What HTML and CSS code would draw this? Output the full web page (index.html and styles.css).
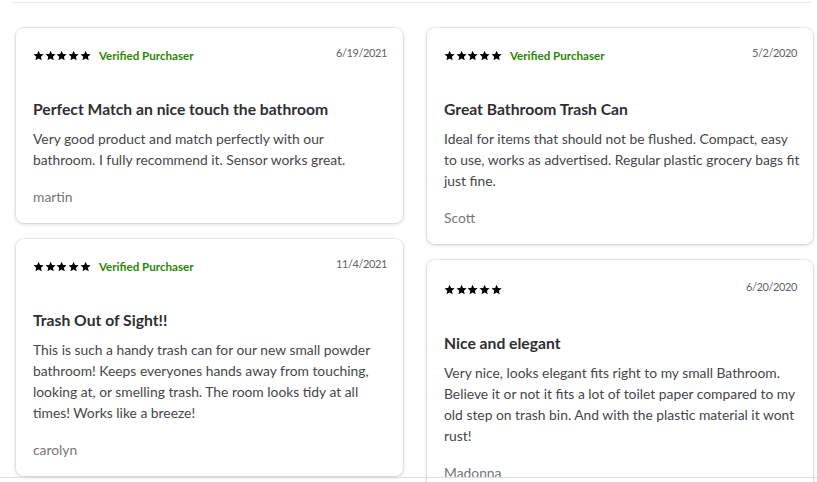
FILE: index.html
```html
<!DOCTYPE html>
<html>
<head>
<meta charset="utf-8">
<link rel="stylesheet" href="styles.css">
</head>
<body>
<svg class="defs" width="0" height="0" aria-hidden="true">
  <defs>
    <symbol id="star" viewBox="0 0 24 24">
      <path d="M12 1.5l3.1 7.1 7.7.7-5.8 5.1 1.7 7.6L12 18l-6.7 4 1.7-7.6-5.8-5.1 7.7-.7z"/>
    </symbol>
  </defs>
</svg>
<div class="page">
  <div class="topline"></div>
  <div class="reviews">
    <div class="col">
      <div class="card">
        <div class="head">
          <div class="rating">
            <span class="stars"><svg><use href="#star"/></svg><svg><use href="#star"/></svg><svg><use href="#star"/></svg><svg><use href="#star"/></svg><svg><use href="#star"/></svg></span>
            <span class="verified">Verified Purchaser</span>
          </div>
          <span class="date">6/19/2021</span>
        </div>
        <h3 class="title">Perfect Match an nice touch the bathroom</h3>
        <p class="text">Very good product and match perfectly with our<br>bathroom. I fully recommend it. Sensor works great.</p>
        <div class="author">martin</div>
      </div>
      <div class="card">
        <div class="head">
          <div class="rating">
            <span class="stars"><svg><use href="#star"/></svg><svg><use href="#star"/></svg><svg><use href="#star"/></svg><svg><use href="#star"/></svg><svg><use href="#star"/></svg></span>
            <span class="verified">Verified Purchaser</span>
          </div>
          <span class="date">11/4/2021</span>
        </div>
        <h3 class="title">Trash Out of Sight!!</h3>
        <p class="text">This is such a handy trash can for our new small powder bathroom! Keeps everyones hands away from touching, looking at, or smelling trash. The room looks tidy at all times! Works like a breeze!</p>
        <div class="author">carolyn</div>
      </div>
    </div>
    <div class="col">
      <div class="card">
        <div class="head">
          <div class="rating">
            <span class="stars"><svg><use href="#star"/></svg><svg><use href="#star"/></svg><svg><use href="#star"/></svg><svg><use href="#star"/></svg><svg><use href="#star"/></svg></span>
            <span class="verified">Verified Purchaser</span>
          </div>
          <span class="date">5/2/2020</span>
        </div>
        <h3 class="title">Great Bathroom Trash Can</h3>
        <p class="text">Ideal for items that should not be flushed. Compact, easy to use, works as advertised. Regular plastic grocery bags fit just fine.</p>
        <div class="author">Scott</div>
      </div>
      <div class="card card-plain">
        <div class="head">
          <div class="rating">
            <span class="stars"><svg><use href="#star"/></svg><svg><use href="#star"/></svg><svg><use href="#star"/></svg><svg><use href="#star"/></svg><svg><use href="#star"/></svg></span>
          </div>
          <span class="date">6/20/2020</span>
        </div>
        <h3 class="title">Nice and elegant</h3>
        <p class="text">Very nice, looks elegant fits right to my small Bathroom. Believe it or not it fits a lot of toilet paper compared to my old step on trash bin. And with the plastic material it wont rust!</p>
        <div class="author">Madonna</div>
      </div>
    </div>
  </div>
  <div class="bottomline"></div>
</div>
</body>
</html>
```

FILE: styles.css
```css
html, body {
  margin: 0;
  padding: 0;
  background: #ffffff;
}
body {
  font-family: Lato, "Open Sans", sans-serif;
  color: #46474a;
  overflow: hidden;
  height: 482px;
}
.defs {
  position: absolute;
  width: 0;
  height: 0;
}
.page {
  padding: 2px 4px 0 12px;
}
.topline {
  height: 1px;
  background: #e9eaeb;
  margin-right: 1px;
}
.reviews {
  display: grid;
  grid-template-columns: 387px 386px;
  column-gap: 24px;
  padding: 25px 0 0 4px;
  align-items: start;
}
.col {
  display: flex;
  flex-direction: column;
  gap: 16px;
}
.card {
  background: #fff;
  border-radius: 8px;
  box-shadow: 0 0 0 1px rgba(0, 0, 0, 0.05), 0 1px 4px rgba(0, 0, 0, 0.18);
  padding: 16px 16px 16px 17px;
}
.head {
  display: flex;
  justify-content: space-between;
  align-items: center;
  height: 20px;
}
.card-plain .head {
  padding-top: 2px;
}
.rating {
  display: flex;
  align-items: center;
  gap: 8px;
  padding-top: 4px;
}
.stars {
  display: flex;
  gap: 0.5px;
}
.stars svg {
  width: 11.2px;
  height: 11.2px;
  fill: #000;
  display: block;
}
.verified {
  font-size: 11.6px;
  font-weight: 700;
  color: #2a8703;
  line-height: 16px;
}
.date {
  font-size: 11px;
  letter-spacing: -0.4px;
  color: #626367;
  line-height: 16px;
  margin-top: -3px;
}
.title {
  margin: 35px 0 0;
  font-size: 15.7px;
  font-weight: 700;
  line-height: 20px;
  color: #2e2f32;
}
.text {
  margin: 9px -5px 0 0;
  font-size: 13.85px;
  line-height: 21px;
  color: #46474a;
}
.author {
  margin-top: 17px;
  font-size: 13.85px;
  line-height: 20px;
  color: #74767c;
}
.bottomline {
  position: absolute;
  left: 0;
  right: 0;
  top: 477px;
  height: 1px;
  background: #dcdddf;
}
```
